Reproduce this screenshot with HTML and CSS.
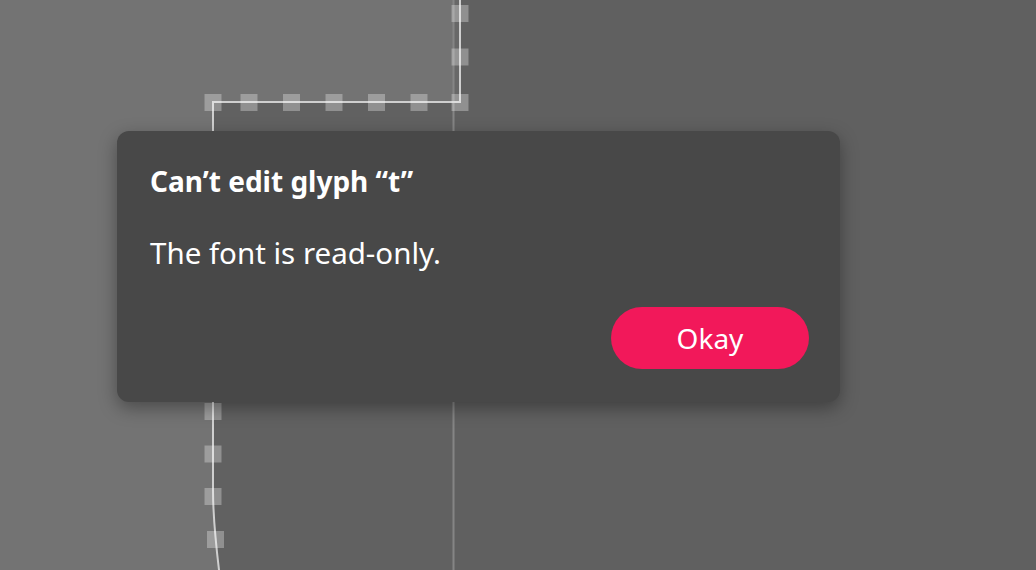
FILE: index.html
```html
<!DOCTYPE html>
<html lang="en">
<head>
    <meta charset="UTF-8">
    <title>Glyph editor</title>
    <link rel="stylesheet" href="styles.css">
</head>
<body>
    <div id="editor">
        <!-- glyph canvas: metrics box, outline and on-curve points -->
        <svg class="canvas" width="1036" height="570" viewBox="0 0 1036 570">
            <rect x="0" y="0" width="1036" height="570" fill="#606060"/>
            <rect x="0" y="0" width="453" height="570" fill="#737373"/>
            <rect x="453" y="0" width="7" height="102" fill="#686868"/>
            <path d="M213,102 H453 V570 H219 C216,545 213,520 213,490 Z" fill="#616161"/>
            <line x1="453.5" y1="0" x2="453.5" y2="570" stroke="#858585" stroke-width="2"/>
            <path d="M460,0 V102 H213 V490 C213,520 216,545 219,570" fill="none" stroke="#cfcfcf" stroke-width="2"/>
            <g fill="#ffffff" fill-opacity="0.3">
                <rect x="451.5" y="5" width="17" height="17"/>
                <rect x="451.5" y="48.5" width="17" height="17"/>
                <rect x="451.5" y="94" width="17" height="17"/>
                <rect x="410.5" y="94" width="17" height="17"/>
                <rect x="368" y="94" width="17" height="17"/>
                <rect x="325.5" y="94" width="17" height="17"/>
                <rect x="283" y="94" width="17" height="17"/>
                <rect x="240.5" y="94" width="17" height="17"/>
                <rect x="204.5" y="94" width="17" height="17"/>
                <rect x="204.5" y="403" width="17" height="17"/>
                <rect x="204.5" y="445.5" width="17" height="17"/>
                <rect x="204.5" y="488" width="17" height="17"/>
                <rect x="207" y="531" width="17" height="17"/>
            </g>
        </svg>

        <div class="dialog">
            <div class="dialog-title">Can’t edit glyph “t”</div>
            <div class="dialog-text">The font is read-only.</div>
            <div class="dialog-actions">
                <button class="dialog-button">Okay</button>
            </div>
        </div>
    </div>
</body>
</html>
```

FILE: styles.css
```css
body {
    margin: 0;
    background-color: #606060;
    font-family: 'Noto Sans', 'Lato', sans-serif;
    overflow: hidden;
}
#editor {
    position: relative;
    width: 1036px;
    height: 570px;
}
.canvas {
    display: block;
}
.dialog {
    position: absolute;
    left: 117px;
    top: 131px;
    width: 723px;
    height: 271px;
    box-sizing: border-box;
    padding: 32px 31px 33px 33px;
    background-color: #484848;
    border-radius: 12px;
    box-shadow: 0 6px 18px rgba(0, 0, 0, 0.35);
    display: flex;
    flex-direction: column;
    color: #fff;
}
.dialog-title {
    font-size: 28px;
    line-height: 36px;
    font-weight: 700;
}
.dialog-text {
    margin-top: 36px;
    font-size: 29.5px;
    line-height: 36px;
}
.dialog-actions {
    margin-top: auto;
    display: flex;
    justify-content: flex-end;
}
.dialog-button {
    width: 198px;
    height: 62px;
    border: none;
    border-radius: 31px;
    background-color: #f2185a;
    color: #fff;
    font-family: inherit;
    font-size: 28px;
    cursor: pointer;
}
```
